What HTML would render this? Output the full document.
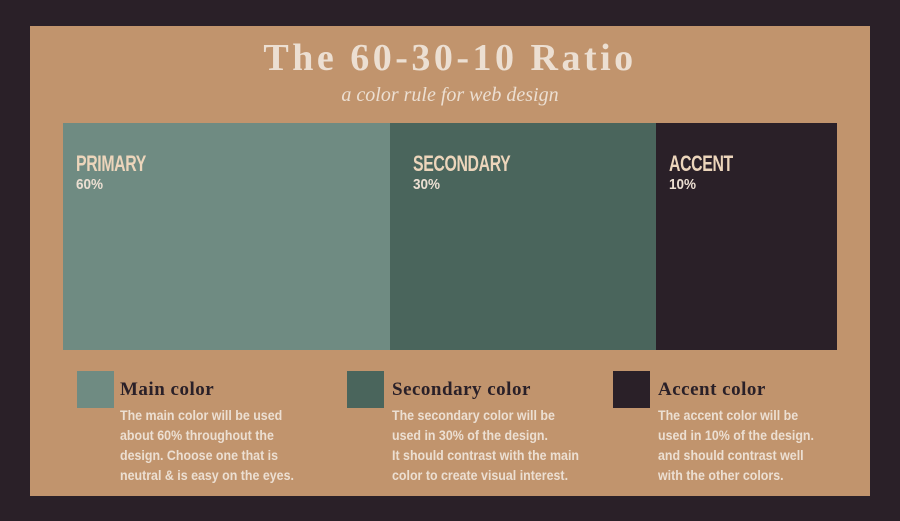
<!DOCTYPE html>
<html><head><style>
*{margin:0;padding:0}
body{width:900px;height:521px;background:#2a2028;position:relative;overflow:hidden;font-family:"Liberation Sans",sans-serif}
#card{position:absolute;left:30px;top:26px;width:840px;height:470px;background:#c1946d}
.t{position:absolute;left:0;width:900px;text-align:center;color:#ecdfd2}
h1{position:absolute;left:0;top:36px;width:900px;text-align:center;font:bold 38px "Liberation Serif",serif;letter-spacing:3.5px;color:#ecdfd2}
.sub{top:84px;font:italic 20px "Liberation Serif",serif;color:#ecdfd2}
.bar{position:absolute;top:123px;height:227px}
.lab{position:absolute;left:13px;top:28px;font:bold 22px "Liberation Sans Narrow","Liberation Sans",sans-serif;color:#ecd5bb;letter-spacing:-0.5px;transform:scaleX(.72);transform-origin:left}
.pc{position:absolute;left:13px;top:53px;font:bold 15px "Liberation Sans",sans-serif;color:#ecdfd2;transform:scaleX(.9);transform-origin:left}
.sw{position:absolute;top:371px;width:37px;height:37px}
.h{position:absolute;top:379px;font:bold 19px "Liberation Serif",serif;color:#2a2028;letter-spacing:.5px}
.d{position:absolute;top:406px;font:bold 13.5px/20px "Liberation Sans",sans-serif;color:#ecdfd2;transform:scaleX(.92);transform-origin:left;white-space:nowrap}
</style></head><body>
<div id="card"></div>
<h1>The 60-30-10 Ratio</h1>
<div class="t sub">a color rule for web design</div>
<div class="bar" style="left:63px;width:327px;background:#6f8b82"><div class="lab">PRIMARY</div><div class="pc">60%</div></div>
<div class="bar" style="left:390px;width:266px;background:#4a655c"><div class="lab" style="left:23px">SECONDARY</div><div class="pc" style="left:23px">30%</div></div>
<div class="bar" style="left:656px;width:181px;background:#2a2028"><div class="lab">ACCENT</div><div class="pc">10%</div></div>
<div class="sw" style="left:77px;background:#6f8b82"></div>
<div class="h" style="left:120px">Main color</div>
<div class="d" style="left:120px">The main color will be used<br>about 60% throughout the<br>design. Choose one that is<br>neutral &amp; is easy on the eyes.</div>
<div class="sw" style="left:347px;background:#4a655c"></div>
<div class="h" style="left:392px">Secondary color</div>
<div class="d" style="left:392px">The secondary color will be<br>used in 30% of the design.<br>It should contrast with the main<br>color to create visual interest.</div>
<div class="sw" style="left:613px;background:#2a2028"></div>
<div class="h" style="left:658px">Accent color</div>
<div class="d" style="left:658px">The accent color will be<br>used in 10% of the design.<br>and should contrast well<br>with the other colors.</div>
</body></html>
